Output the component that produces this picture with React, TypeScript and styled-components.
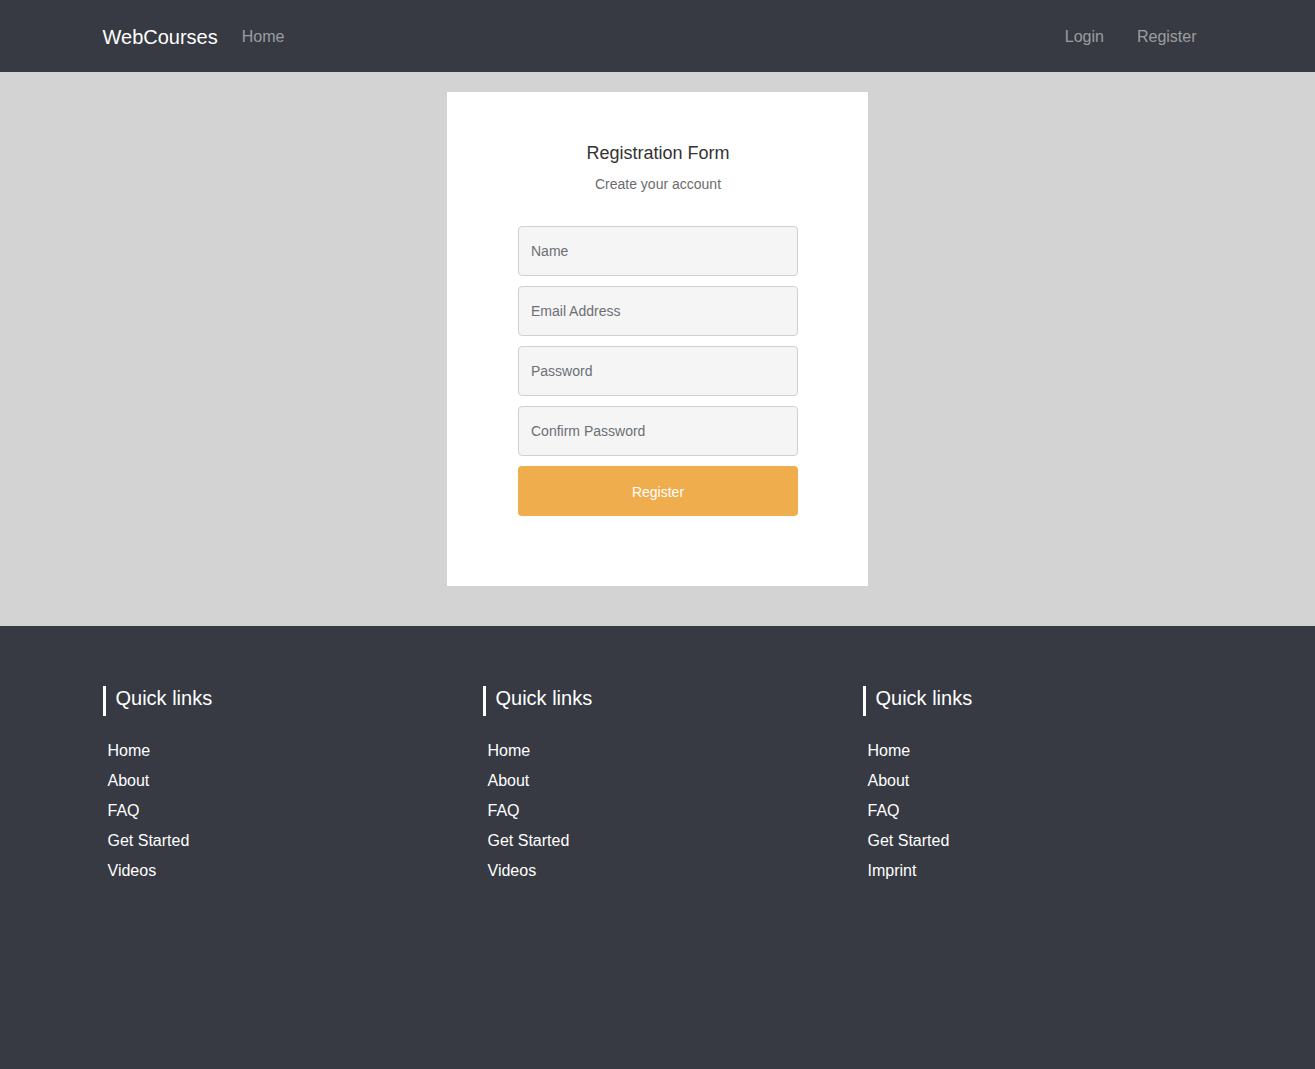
import React from 'react';
import styled, { createGlobalStyle } from 'styled-components';

const GlobalStyle = createGlobalStyle`
    * { box-sizing: border-box; }
    body {
        margin: 0;
        font-family: "Liberation Sans", Arial, sans-serif;
        background: #373a42;
    }
`;

const Navbar = styled.nav`
    background: #373a42;
    height: 72px;
    padding-top: 2px;
`;

const Container = styled.div`
    width: 1140px;
    margin: 0 auto;
    padding: 0 15px;
`;

const NavInner = styled(Container)`
    display: flex;
    align-items: center;
    height: 100%;
`;

const Brand = styled.a`
    color: #fff;
    font-size: 20px;
    margin-right: 16px;
    text-decoration: none;
`;

const NavLink = styled.a`
    color: rgba(255, 255, 255, 0.5);
    font-size: 16px;
    padding: 8px;
    text-decoration: none;
`;

const NavRight = styled.div`
    margin-left: auto;
    display: flex;
    gap: 17px;
    margin-right: 8px;
`;

const Main = styled.main`
    background: #d3d3d3;
    padding: 20px 0 40px;
    display: flex;
    justify-content: center;
`;

const Card = styled.div`
    background: #fff;
    width: 421px;
    padding: 50px 70px 70px 71px;
    display: flex;
    flex-direction: column;
    align-items: center;
`;

const Title = styled.h2`
    margin: 0;
    font-size: 18px;
    font-weight: normal;
    color: #333;
    line-height: 22px;
`;

const Subtitle = styled.p`
    margin: 10px 0 32px;
    font-size: 14px;
    color: #6c6c6c;
    line-height: 20px;
`;

const Form = styled.form`
    width: 280px;
    display: flex;
    flex-direction: column;
    gap: 10px;
`;

const Input = styled.input`
    height: 50px;
    width: 100%;
    background: #f5f5f5;
    border: 1px solid #d0d0d0;
    border-radius: 4px;
    padding: 0 12px;
    font-family: inherit;
    font-size: 14px;
    color: #333;
    &::placeholder {
        color: #6b6f75;
    }
`;

const Button = styled.button`
    height: 50px;
    width: 100%;
    border: none;
    border-radius: 4px;
    padding: 2px 0 0;
    background: #f0ad4e;
    color: #fff;
    font-family: inherit;
    font-size: 14px;
`;

const Footer = styled.footer`
    background: #373a42;
    padding: 60px 0 180px;
`;

const Row = styled.div`
    display: grid;
    grid-template-columns: repeat(3, 1fr);
    margin: 0 -15px;
`;

const Col = styled.div`
    padding: 0 15px;
`;

const ColTitle = styled.h4`
    margin: 0 0 20px;
    border-left: 3px solid #fff;
    padding-left: 10px;
    height: 30px;
    line-height: 24px;
    font-size: 20px;
    font-weight: normal;
    color: #fff;
`;

const LinkList = styled.ul`
    list-style: none;
    margin: 0;
    padding: 0 0 0 5px;
`;

const FooterLink = styled.li`
    color: #fff;
    font-size: 16px;
    line-height: 30px;
`;

const columns = [
    ['Home', 'About', 'FAQ', 'Get Started', 'Videos'],
    ['Home', 'About', 'FAQ', 'Get Started', 'Videos'],
    ['Home', 'About', 'FAQ', 'Get Started', 'Imprint'],
];

const App: React.FC = () => {
    return (
        <>
            <GlobalStyle />
            <Navbar>
                <NavInner>
                    <Brand href="#">WebCourses</Brand>
                    <NavLink href="#">Home</NavLink>
                    <NavRight>
                        <NavLink href="#">Login</NavLink>
                        <NavLink href="#">Register</NavLink>
                    </NavRight>
                </NavInner>
            </Navbar>

            <Main>
                <Card>
                    <Title>Registration Form</Title>
                    <Subtitle>Create your account</Subtitle>
                    <Form onSubmit={e => e.preventDefault()}>
                        <Input placeholder="Name" />
                        <Input placeholder="Email Address" />
                        <Input type="password" placeholder="Password" />
                        <Input type="password" placeholder="Confirm Password" />
                        <Button type="submit">Register</Button>
                    </Form>
                </Card>
            </Main>

            <Footer>
                <Container>
                    <Row>
                        {columns.map((links, i) => (
                            <Col key={i}>
                                <ColTitle>Quick links</ColTitle>
                                <LinkList>
                                    {links.map(link => (
                                        <FooterLink key={link}>{link}</FooterLink>
                                    ))}
                                </LinkList>
                            </Col>
                        ))}
                    </Row>
                </Container>
            </Footer>
        </>
    );
};

export default App;
